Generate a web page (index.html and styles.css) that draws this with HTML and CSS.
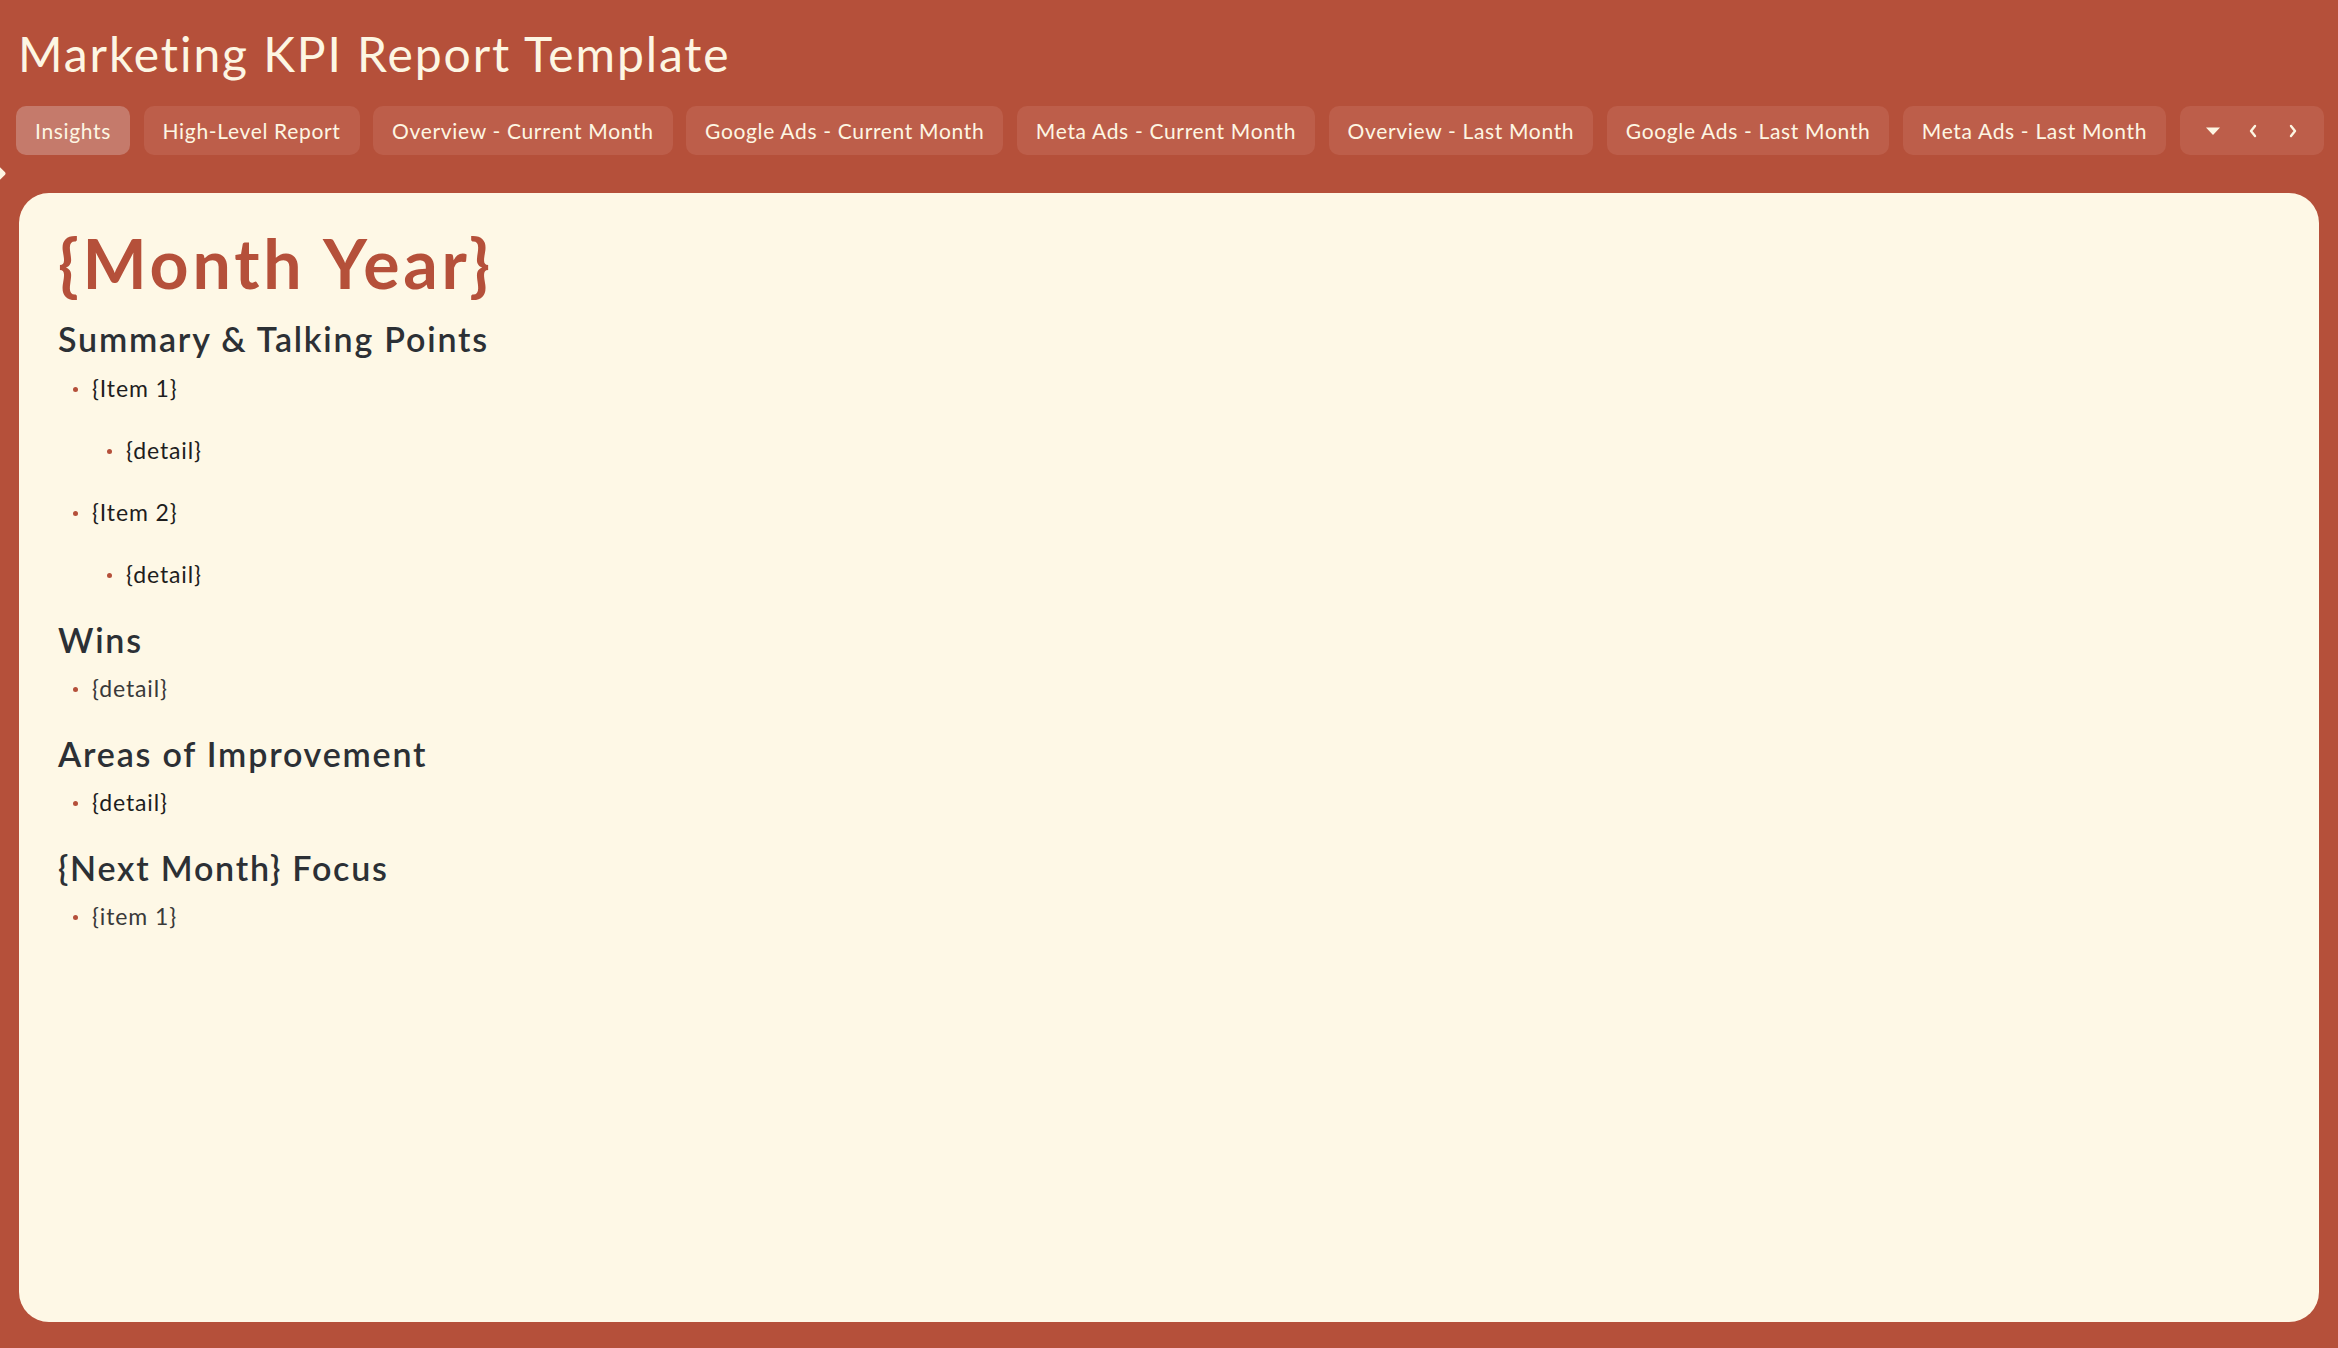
FILE: index.html
```html
<!DOCTYPE html>
<html lang="en">
<head>
    <meta charset="UTF-8">
    <title>Marketing KPI Report Template</title>
    <link rel="stylesheet" href="styles.css">
</head>
<body>
    <span class="edge-handle"></span>

    <header class="report-header">
        <h1 class="report-title">Marketing KPI Report Template</h1>
        <nav class="sheet-tabs">
            <a class="tab active">Insights</a>
            <a class="tab">High-Level Report</a>
            <a class="tab">Overview - Current Month</a>
            <a class="tab">Google Ads - Current Month</a>
            <a class="tab">Meta Ads - Current Month</a>
            <a class="tab">Overview - Last Month</a>
            <a class="tab">Google Ads - Last Month</a>
            <a class="tab">Meta Ads - Last Month</a>
            <div class="tab tab-controls">
                <svg class="ctl-menu" width="16" height="10" viewBox="0 0 16 10"><path d="M1 1.5h14L8 9z" fill="#fdf6e3"/></svg>
                <svg class="ctl-prev" width="10" height="14" viewBox="0 0 10 14"><path d="M7 2L3 7l4 5" fill="none" stroke="#fdf6e3" stroke-width="2.4" stroke-linecap="round" stroke-linejoin="round"/></svg>
                <svg class="ctl-next" width="10" height="14" viewBox="0 0 10 14"><path d="M3 2l4 5-4 5" fill="none" stroke="#fdf6e3" stroke-width="2.4" stroke-linecap="round" stroke-linejoin="round"/></svg>
            </div>
        </nav>
    </header>

    <main class="page-card">
        <h2 class="month-title">{Month Year}</h2>

        <h3 class="section-title first">Summary &amp; Talking Points</h3>
        <ul class="points">
            <li>{Item 1}
                <ul class="points">
                    <li>{detail}</li>
                </ul>
            </li>
            <li>{Item 2}
                <ul class="points">
                    <li>{detail}</li>
                </ul>
            </li>
        </ul>

        <h3 class="section-title">Wins</h3>
        <ul class="points muted">
            <li>{detail}</li>
        </ul>

        <h3 class="section-title">Areas of Improvement</h3>
        <ul class="points">
            <li>{detail}</li>
        </ul>

        <h3 class="section-title">{Next Month} Focus</h3>
        <ul class="points muted">
            <li>{item 1}</li>
        </ul>
    </main>
</body>
</html>
```

FILE: styles.css
```css
body {
    font-family: 'Lato', 'Open Sans', sans-serif;
    background: #b5503a; /* Brick */
    color: #fdf6e3; /* Cream */
    margin: 0;
    padding: 0 0 26px;
    min-height: 100vh;
    box-sizing: border-box;
    position: relative;
}
.edge-handle {
    position: absolute;
    left: -7px;
    top: 168px;
    width: 11px;
    height: 11px;
    background: #fdf6e3;
    transform: rotate(45deg);
    border-radius: 2px;
}
.report-header {
    padding: 25px 15px 0 16px;
}
.report-title {
    margin: 0 0 0 2px;
    font-size: 48px;
    font-weight: 400;
    line-height: 58px;
    letter-spacing: 1.9px;
    color: #fdf6e3;
}
.sheet-tabs {
    display: flex;
    gap: 13.5px;
    margin-top: 23px;
}
.tab {
    display: flex;
    align-items: center;
    height: 49px;
    padding: 0 19px;
    background-color: #bd5e4a;
    border-radius: 10px;
    font-size: 21px;
    letter-spacing: 0.67px;
    color: #fdf6e3;
    white-space: nowrap;
    cursor: pointer;
}
.tab.active {
    background-color: #c57a6b;
}
.tab-controls {
    padding: 0 26px 0 25px;
}
.ctl-prev {
    margin-left: 27px;
}
.ctl-next {
    margin-left: 30px;
}
.page-card {
    margin: 38px 19px 0;
    height: 1129px;
    box-sizing: border-box;
    padding: 30px 39px;
    background: #fef8e6; /* Paper */
    border-radius: 30px;
    color: #1e1e1e;
}
.month-title {
    margin: 0;
    font-size: 68px;
    line-height: 80px;
    font-weight: 700;
    letter-spacing: 3.8px;
    color: #b5503a;
}
.section-title {
    margin: 31px 0 13px;
    font-size: 34px;
    line-height: 40px;
    font-weight: 600;
    letter-spacing: 1.8px;
    color: #2c3035;
}
.section-title.first {
    margin-top: 16px;
    margin-bottom: 14px;
}
.points {
    list-style: none;
    margin: 0;
    padding: 0 0 0 34px;
}
.points li {
    position: relative;
    font-size: 23px;
    line-height: 30px;
    letter-spacing: 0.9px;
}
.points li + li {
    margin-top: 32px;
}
.points li::before {
    content: "";
    position: absolute;
    left: -19px;
    top: 14px;
    width: 5px;
    height: 5px;
    border-radius: 50%;
    background: #b5503a;
}
.points .points {
    margin-top: 32px;
}
.points.muted li {
    color: #3a3a3a;
}
```
